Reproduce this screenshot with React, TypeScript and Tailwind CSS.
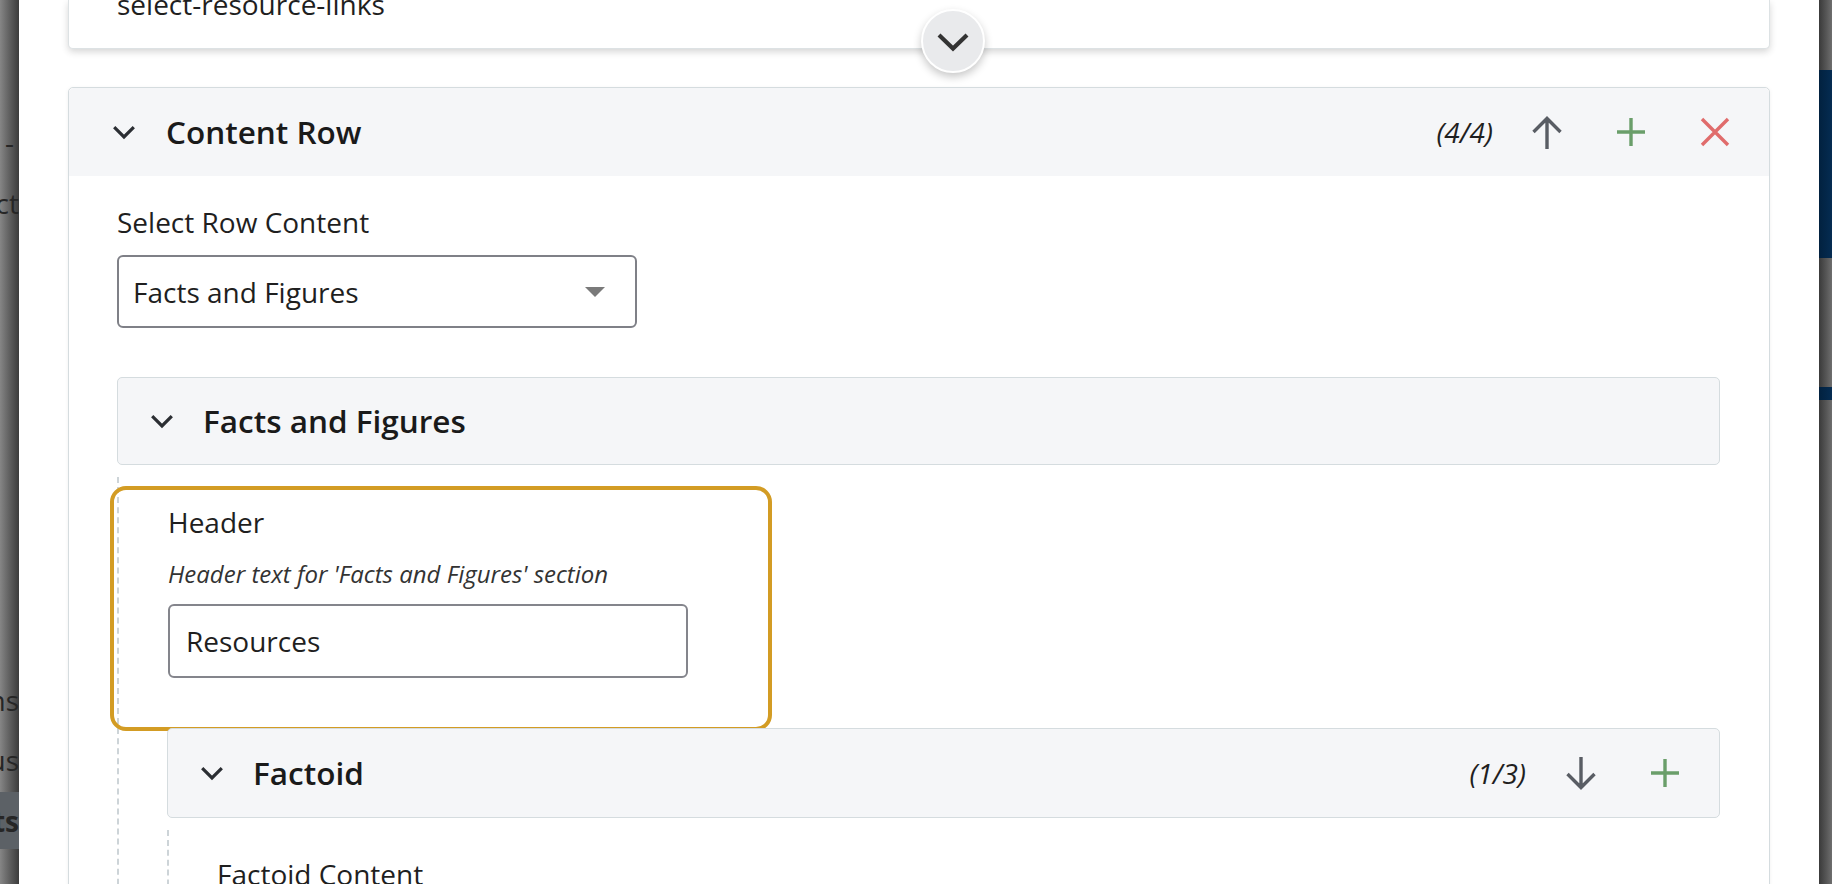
import React from "react";

function Chevron({ color = "#2b2e33" }: { color?: string }) {
  return (
    <svg width="24" height="15" viewBox="0 0 24 15" className="shrink-0">
      <path d="M2.2 2.2 L12 12 L21.8 2.2" fill="none" stroke={color} strokeWidth="3.2" />
    </svg>
  );
}

function ArrowUp() {
  return (
    <svg width="34" height="33" viewBox="0 0 34 33">
      <path d="M17 3 V33 M3.5 16 L17 2.5 L30.5 16" fill="none" stroke="#595d64" strokeWidth="3.4" />
    </svg>
  );
}

function ArrowDown() {
  return (
    <svg width="34" height="33" viewBox="0 0 34 33">
      <path d="M17 0 V30 M3.5 17 L17 30.5 L30.5 17" fill="none" stroke="#595d64" strokeWidth="3.4" />
    </svg>
  );
}

function Plus() {
  return (
    <svg width="30" height="30" viewBox="0 0 30 30">
      <path d="M15 1 V29 M1 15 H29" fill="none" stroke="#6a9e6a" strokeWidth="3.4" />
    </svg>
  );
}

function XIcon() {
  return (
    <svg width="30" height="30" viewBox="0 0 30 30">
      <path d="M2 2 L28 28 M28 2 L2 28" fill="none" stroke="#e06c6c" strokeWidth="3.4" />
    </svg>
  );
}

function IconBtn({ children }: { children: React.ReactNode }) {
  return <div className="w-[84px] flex justify-center items-center">{children}</div>;
}

function LeftStrip() {
  return (
    <div className="w-[19px] shrink-0 overflow-hidden bg-gradient-to-r from-[#868686] to-[#3c3c3c] flex flex-col text-[28px] text-[#262626] leading-[42px]">
      <div className="mt-[121px] h-[42px] flex justify-end pr-[5px] whitespace-nowrap">-</div>
      <div className="mt-[19px] h-[42px] flex justify-end whitespace-nowrap">Select</div>
      <div className="mt-[455px] h-[42px] flex justify-end whitespace-nowrap">Items</div>
      <div className="mt-[18px] h-[42px] flex justify-end whitespace-nowrap">Status</div>
      <div className="mt-[11px] h-[57px] bg-[#5c6166] flex items-center justify-end whitespace-nowrap font-bold">Facts</div>
    </div>
  );
}

function RightStrip() {
  return (
    <div className="w-[13px] shrink-0 overflow-hidden bg-gradient-to-r from-[#3a3a3a] to-[#6e6e6e] flex flex-col">
      <div className="h-[70px]" />
      <div className="h-[188px] bg-gradient-to-r from-[#02213f] to-[#052c52]" />
      <div className="h-[129px]" />
      <div className="h-[13px] bg-gradient-to-r from-[#02213f] to-[#052c52]" />
    </div>
  );
}

export default function App() {
  return (
    <div className="w-[1832px] h-[884px] overflow-hidden flex font-['Open_Sans',sans-serif] text-[#1f1f1f] bg-white">
      <LeftStrip />
      <div className="relative flex-1 bg-white overflow-hidden">
        <div className="px-[49px]">
          {/* top card */}
          <div className="h-[49px] bg-white border border-t-0 border-[#dde2e4] rounded-b-[5px] shadow-[0_3px_7px_rgba(0,0,0,0.16)] pl-[48px] overflow-hidden">
            <div className="text-[28px] leading-[28px] mt-[-10px]">select-resource-links</div>
          </div>

          {/* Content Row card */}
          <div className="mt-[38px] border border-[#d5dcdf] rounded-[5px] bg-white shadow-[0_1px_4px_rgba(0,0,0,0.06)]">
            <div className="h-[88px] bg-[#f5f6f8] rounded-t-[5px] flex items-center pl-[43px] pr-[12px]">
              <Chevron />
              <div className="ml-[30px] text-[31.5px] font-semibold text-[#1a1a1a]">Content Row</div>
              <div className="ml-auto flex items-center">
                <span className="italic text-[28px] mr-[12px]">(4/4)</span>
                <IconBtn><ArrowUp /></IconBtn>
                <IconBtn><Plus /></IconBtn>
                <IconBtn><XIcon /></IconBtn>
              </div>
            </div>

            <div className="pl-[48px] pr-[49px] pt-[25px] pb-[40px]">
              <div className="text-[28px] leading-[42px]">Select Row Content</div>
              <div className="mt-[12px] w-[520px] h-[73px] border-2 border-[#7f8087] rounded-[6px] flex items-center pl-[14px] pr-[30px]">
                <span className="text-[28px]">Facts and Figures</span>
                <svg width="20" height="10" viewBox="0 0 20 10" className="ml-auto">
                  <path d="M0 0 H20 L10 10 Z" fill="#7a7a7a" />
                </svg>
              </div>

              {/* Facts and Figures */}
              <div className="mt-[49px] h-[88px] border border-[#d5dcdf] rounded-[5px] bg-[#f5f6f8] flex items-center pl-[32px]">
                <Chevron />
                <div className="ml-[29px] text-[31.5px] font-semibold text-[#1a1a1a]">Facts and Figures</div>
              </div>

              <div className="mt-[12px] border-l-2 border-dashed border-[#cdd4d8] pl-[48px] pt-[9px]">
                <div className="ml-[-57px] w-[662px] border-[4px] border-[#d39c24] rounded-[16px] pt-[11px] pl-[54px] pb-[49px]">
                  <div className="text-[28px] leading-[42px]">Header</div>
                  <div className="mt-[13px] text-[24px] leading-[36px] italic text-[#333]">Header text for 'Facts and Figures' section</div>
                  <div className="mt-[12px] w-[520px] h-[74px] border-2 border-[#84858c] rounded-[6px] flex items-center pl-[16px]">
                    <span className="text-[28px]">Resources</span>
                  </div>
                </div>

                {/* Factoid */}
                <div className="mt-[-3px] h-[90px] border border-[#d5dcdf] rounded-[5px] bg-[#f5f6f8] flex items-center pl-[32px] pr-[12px]">
                  <Chevron />
                  <div className="ml-[29px] text-[31.5px] font-semibold text-[#1a1a1a]">Factoid</div>
                  <div className="ml-auto flex items-center">
                    <span className="italic text-[28px] mr-[13px]">(1/3)</span>
                    <IconBtn><ArrowDown /></IconBtn>
                    <IconBtn><Plus /></IconBtn>
                  </div>
                </div>

                <div className="mt-[12px] border-l-2 border-dashed border-[#cdd4d8] pl-[48px] pt-[23px] pb-[40px]">
                  <div className="text-[28px] leading-[42px]">Factoid Content</div>
                </div>
              </div>
            </div>
          </div>
        </div>

        {/* collapse toggle button overlapping top card */}
        <div className="absolute left-[902px] top-[9px] w-[64px] h-[64px] rounded-full bg-[#e9eaec] border-2 border-white shadow-[0_4px_9px_rgba(0,0,0,0.22)] flex items-center justify-center">
          <svg width="34" height="20" viewBox="0 0 34 20" className="mt-[2px]">
            <path d="M3 3 L17 16.5 L31 3" fill="none" stroke="#333" strokeWidth="4.2" />
          </svg>
        </div>
      </div>
      <RightStrip />
    </div>
  );
}
